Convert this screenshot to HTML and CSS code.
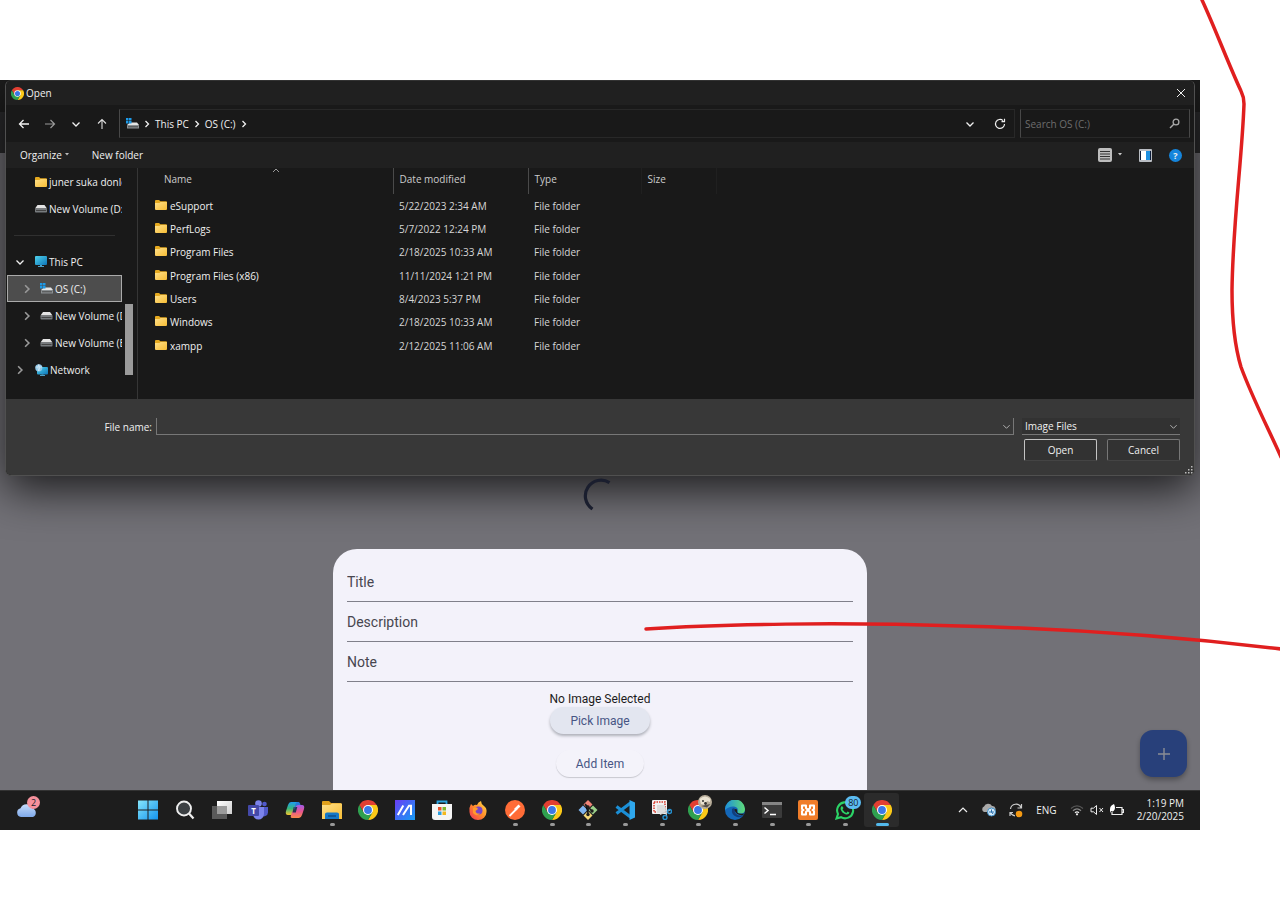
FILE: index.html
```html
<!DOCTYPE html>
<html lang="en">
<head>
<meta charset="utf-8">
<title>Open</title>
<link rel="stylesheet" href="styles.css">
</head>
<body>
<svg class="defs" aria-hidden="true">
  <defs>
    <linearGradient id="gFolder" x1="0" y1="0" x2="1" y2="1"><stop offset="0" stop-color="#ffe08a"/><stop offset="1" stop-color="#f7bd35"/></linearGradient>
    <linearGradient id="gScreen" x1="0" y1="0" x2="1" y2="1"><stop offset="0" stop-color="#4fd3ec"/><stop offset="1" stop-color="#0d74b8"/></linearGradient>
    <linearGradient id="gWin" x1="0" y1="0" x2="1" y2="1"><stop offset="0" stop-color="#86e6fb"/><stop offset="1" stop-color="#1393ee"/></linearGradient>
    <linearGradient id="gCloud" x1="0" y1="0" x2="0" y2="1"><stop offset="0" stop-color="#c5dcfb"/><stop offset="1" stop-color="#7fa9ea"/></linearGradient>
    <linearGradient id="gMy" x1="0" y1="0" x2="1" y2="1"><stop offset="0" stop-color="#6a3df5"/><stop offset="1" stop-color="#159df5"/></linearGradient>
    <linearGradient id="gCopA" x1="0" y1="0" x2="0" y2="1"><stop offset="0" stop-color="#1f9cf0"/><stop offset=".5" stop-color="#37b67c"/><stop offset="1" stop-color="#f6c52d"/></linearGradient>
    <linearGradient id="gCopB" x1="0" y1="0" x2="0" y2="1"><stop offset="0" stop-color="#a05be8"/><stop offset=".5" stop-color="#e8568f"/><stop offset="1" stop-color="#f98a4a"/></linearGradient>
    <linearGradient id="gFox" x1="1" y1="0" x2="0" y2="1"><stop offset="0" stop-color="#ffe14a"/><stop offset=".5" stop-color="#ff8a2a"/><stop offset="1" stop-color="#f0305a"/></linearGradient>
    <linearGradient id="gEdge" x1="0" y1="0" x2="1" y2="0"><stop offset="0" stop-color="#1d8fdc"/><stop offset="1" stop-color="#5fdc78"/></linearGradient>
    <linearGradient id="gTask" x1="0" y1="0" x2="1" y2="1"><stop offset="0" stop-color="#fff"/><stop offset="1" stop-color="#cfcfcf"/></linearGradient>
    <symbol id="chrome" viewBox="0 0 24 24">
      <path fill="#e23f32" d="M1.6 6A12 12 0 0 1 22.4 6H12L6.8 15Z"/>
      <path fill="#fbc918" d="M22.4 6A12 12 0 0 1 12 24L17.2 15 12 6Z"/>
      <path fill="#2fa04f" d="M12 24A12 12 0 0 1 1.6 6L6.8 15H17.2Z"/>
      <circle cx="12" cy="12" r="6" fill="#fff"/><circle cx="12" cy="12" r="4.7" fill="#3b78e7"/>
    </symbol>
    <symbol id="folder" viewBox="0 0 12 10">
      <path fill="#e5a91f" d="M0 1Q0 0 1 0H4L5.400 1.300H11Q12 1.300 12 2.300V5H0Z"/>
      <path fill="url(#gFolder)" d="M0 3H4.500L5.600 2H12V9Q12 10 11 10H1Q0 10 0 9Z"/>
    </symbol>
    <symbol id="drive" viewBox="0 0 12 8">
      <path fill="#e4e4e4" d="M2.500 0H9.500L12 3.500H0Z"/><rect y="3.500" width="12" height="4" rx=".8" fill="#777b7e"/><rect x="1" y="5" width="10" height="1" fill="#444"/>
    </symbol>
    <symbol id="osdrive" viewBox="0 0 13 11">
      <path fill="#e4e4e4" d="M4 4.500H11L13 7H1Z"/><rect x="1" y="7" width="12" height="3.500" rx=".6" fill="#8b9093"/><rect x="2" y="8.300" width="10" height="1" fill="#494949"/>
      <path fill="#1d9ae8" d="M0 0H2.500V2.500H0ZM3 0H5.500V2.500H3ZM0 3H2.500V5.500H0ZM3 3H5.500V5.500H3Z"/>
    </symbol>
    <symbol id="pc" viewBox="0 0 12 11"><rect width="12" height="9" rx="1" fill="url(#gScreen)"/><path fill="#4d9fc5" d="M5 9H7V10H9V11H3V10H5Z"/></symbol>
    <symbol id="network" viewBox="0 0 13 12"><rect x="2" y="3" width="11" height="7.500" rx="1" fill="url(#gScreen)"/><path fill="#4d9fc5" d="M6.500 10.500H8.500V11H10V12H5V11H6.500Z"/><circle cx="3.800" cy="3.800" r="3.600" fill="#8fc7e6"/><path d="M.8 3H7M3.800.4Q2 3.800 3.800 7M3.800.4Q5.600 3.800 3.800 7" fill="none" stroke="#e7f4fb" stroke-width=".6"/></symbol>
    <symbol id="right" viewBox="0 0 8 8"><path d="M2.500 1L5.500 4 2.500 7" fill="none" stroke="currentColor" stroke-width="1.300"/></symbol>
    <symbol id="down" viewBox="0 0 10 10"><path d="M1.500 3.500L5 7 8.500 3.500" fill="none" stroke="currentColor" stroke-width="1.300"/></symbol>
  </defs>
</svg>

<main class="desktop">
  <section class="stage">
    <section class="dialog" aria-label="Open">
      <header class="titlebar">
        <svg width="13" height="13"><use href="#chrome"/></svg>
        <h1>Open</h1>
        <button class="plain close" aria-label="Close"><svg width="10" height="10" viewBox="0 0 10 10"><path d="M1 1L9 9M9 1L1 9" stroke="#eee" stroke-width="1"/></svg></button>
      </header>
      <nav class="navbar">
        <div class="arrows">
          <button class="plain" aria-label="Back"><svg width="12" height="12" viewBox="0 0 12 12"><path d="M11 6H1.500M5.500 2L1.500 6 5.500 10" fill="none" stroke="#f2f2f2" stroke-width="1.300"/></svg></button>
          <button class="plain" aria-label="Forward"><svg width="12" height="12" viewBox="0 0 12 12"><path d="M1 6H10.500M6.500 2L10.500 6 6.500 10" fill="none" stroke="#9a9a9a" stroke-width="1.200"/></svg></button>
          <button class="plain" aria-label="Recent locations"><svg width="10" height="10"><use href="#down"/></svg></button>
          <button class="plain" aria-label="Up"><svg width="12" height="12" viewBox="0 0 12 12"><path d="M6 11V1.500M2 5.500L6 1.500 10 5.500" fill="none" stroke="#ddd" stroke-width="1.100"/></svg></button>
        </div>
        <div class="address">
          <svg width="13" height="11"><use href="#osdrive"/></svg>
          <svg width="8" height="8"><use href="#right"/></svg>
          <a href="#pc">This PC</a>
          <svg width="8" height="8"><use href="#right"/></svg>
          <a href="#c">OS (C:)</a>
          <svg width="8" height="8"><use href="#right"/></svg>
          <button class="plain history" aria-label="Previous locations"><svg width="10" height="10"><use href="#down"/></svg></button>
          <button class="plain" aria-label="Refresh"><svg width="12" height="12" viewBox="0 0 12 12"><path d="M10.500 6A4.500 4.500 0 1 1 9 2.600M10.500 .8V3.600H7.500" fill="none" stroke="#eee" stroke-width="1.200"/></svg></button>
        </div>
        <div class="search">
          <input type="search" placeholder="Search OS (C:)" aria-label="Search OS (C:)">
          <svg width="11" height="11" viewBox="0 0 11 11"><circle cx="7" cy="4" r="2.900" fill="none" stroke="#aaa" stroke-width="1.300"/><path d="M5 6L1 10" stroke="#aaa" stroke-width="1.500"/></svg>
        </div>
      </nav>
      <div class="toolbar">
        <button class="plain organize">Organize <svg width="6" height="4" viewBox="0 0 6 4"><path fill="#bbb" d="M1 0H5L3 2.500Z"/></svg></button>
        <button class="plain">New folder</button>
        <button class="plain view" aria-label="Change your view"><svg width="14" height="14" viewBox="0 0 14 14"><rect width="14" height="14" rx="2" fill="#bdbdbd"/><path d="M2 3.500H12M2 6H12M2 8.500H12M2 11H12" stroke="#333"/></svg><svg width="6" height="4" viewBox="0 0 6 4"><path fill="#ccc" d="M1 0H5L3 2.500Z"/></svg></button>
        <button class="plain" aria-label="Preview pane"><svg width="13" height="13" viewBox="0 0 13 13"><rect width="13" height="13" rx="1" fill="#b9bdc3"/><rect x="1" y="2" width="11" height="9" fill="#0d1d3a"/><rect x="2" y="2" width="5" height="9" fill="#fff"/><rect x="7" y="2" width="4" height="9" fill="#1d8fe0"/></svg></button>
        <button class="help" aria-label="Help">?</button>
      </div>
      <div class="content">
        <aside class="sidebar">
          <ul class="tree">
            <li><a href="#d" class="shortcut"><svg width="12" height="10"><use href="#folder"/></svg>juner suka donlod</a></li>
            <li><a href="#d" class="shortcut"><svg width="12" height="8"><use href="#drive"/></svg>New Volume (D:)</a></li>
            <li class="rule"></li>
            <li><a href="#d" class="root open"><svg class="tw" width="10" height="10"><use href="#down"/></svg><svg width="12" height="11"><use href="#pc"/></svg>This PC</a></li>
            <li><a href="#d" class="child selected"><svg class="tw" width="10" height="10"><use href="#right"/></svg><svg width="13" height="11"><use href="#osdrive"/></svg>OS (C:)</a></li>
            <li><a href="#d" class="child"><svg class="tw" width="10" height="10"><use href="#right"/></svg><svg width="13" height="8"><use href="#drive"/></svg>New Volume (D:)</a></li>
            <li><a href="#d" class="child"><svg class="tw" width="10" height="10"><use href="#right"/></svg><svg width="13" height="8"><use href="#drive"/></svg>New Volume (E:)</a></li>
            <li><a href="#d" class="root"><svg class="tw" width="10" height="10"><use href="#right"/></svg><svg width="13" height="12"><use href="#network"/></svg>Network</a></li>
          </ul>
          <div class="track"><div class="thumb"></div></div>
        </aside>
        <div class="files">
          <table>
            <colgroup><col class="c-name"><col class="c-date"><col class="c-type"><col class="c-size"><col></colgroup>
            <thead><tr><th class="name">Name<svg class="sort" width="8" height="5" viewBox="0 0 8 5"><path d="M1 4L4 1 7 4" fill="none" stroke="#999"/></svg></th><th>Date modified</th><th>Type</th><th>Size</th><th></th></tr></thead>
            <tbody>
              <tr><td><svg width="12" height="10"><use href="#folder"/></svg>eSupport</td><td>5/22/2023 2:34 AM</td><td>File folder</td><td></td><td></td></tr>
              <tr><td><svg width="12" height="10"><use href="#folder"/></svg>PerfLogs</td><td>5/7/2022 12:24 PM</td><td>File folder</td><td></td><td></td></tr>
              <tr><td><svg width="12" height="10"><use href="#folder"/></svg>Program Files</td><td>2/18/2025 10:33 AM</td><td>File folder</td><td></td><td></td></tr>
              <tr><td><svg width="12" height="10"><use href="#folder"/></svg>Program Files (x86)</td><td>11/11/2024 1:21 PM</td><td>File folder</td><td></td><td></td></tr>
              <tr><td><svg width="12" height="10"><use href="#folder"/></svg>Users</td><td>8/4/2023 5:37 PM</td><td>File folder</td><td></td><td></td></tr>
              <tr><td><svg width="12" height="10"><use href="#folder"/></svg>Windows</td><td>2/18/2025 10:33 AM</td><td>File folder</td><td></td><td></td></tr>
              <tr><td><svg width="12" height="10"><use href="#folder"/></svg>xampp</td><td>2/12/2025 11:06 AM</td><td>File folder</td><td></td><td></td></tr>
            </tbody>
          </table>
        </div>
      </div>
      <footer class="footer">
        <div class="file-row">
          <label for="fname">File name:</label>
          <div class="combo"><input id="fname" type="text"><svg width="9" height="9" viewBox="0 0 10 10"><path d="M1.500 3.500L5 7 8.500 3.500" fill="none" stroke="#bbb"/></svg></div>
          <div class="combo type"><select aria-label="File type"><option>Image Files</option></select><svg width="9" height="9" viewBox="0 0 10 10"><path d="M1.500 3.500L5 7 8.500 3.500" fill="none" stroke="#bbb"/></svg></div>
        </div>
        <div class="actions"><button class="btn primary">Open</button><button class="btn">Cancel</button></div>
        <svg class="grip" width="8" height="8" viewBox="0 0 8 8"><path fill="#bbb" d="M6 0H7.500V1.500H6ZM3 3H4.500V4.500H3ZM6 3H7.500V4.500H6ZM0 6H1.500V7.500H0ZM3 6H4.500V7.500H3ZM6 6H7.500V7.500H6Z"/></svg>
      </footer>
    </section>

    <div class="loading"><svg width="34" height="34" viewBox="0 0 34 34"><path d="M26.500 4.700A15 15 0 0 0 9.500 31" fill="none" stroke="#1a1e2e" stroke-width="3.200"/></svg></div>

    <form class="sheet">
      <input class="field" type="text" placeholder="Title" aria-label="Title">
      <input class="field" type="text" placeholder="Description" aria-label="Description">
      <input class="field" type="text" placeholder="Note" aria-label="Note">
      <p>No Image Selected</p>
      <button type="button" class="pill filled">Pick Image</button>
      <button type="button" class="pill">Add Item</button>
    </form>
    <button class="fab" aria-label="Add"><svg width="12" height="12" viewBox="0 0 12 12"><path d="M6 0V12M0 6H12" stroke="#8b8d95" stroke-width="1.400"/></svg></button>
  </section>

  <footer class="taskbar">
    <div class="widgets"><button class="plain weather" aria-label="Widgets"><svg width="22" height="14" viewBox="0 0 22 14"><path fill="url(#gCloud)" d="M5 14A4.500 4.500 0 0 1 4.500 5.200 6.500 6.500 0 0 1 16.500 5.500 4.500 4.500 0 0 1 17 14Z"/></svg><span class="badge pink">2</span></button></div>
    <div class="apps">
      <button class="app" aria-label="Start"><svg viewBox="0 0 20 20"><path fill="url(#gWin)" d="M0 .5H9.500V9.500H0ZM10.500 .5H20V9.500H10.500ZM0 10.500H9.500V19.500H0ZM10.500 10.500H20V19.500H10.500Z"/></svg></button>
      <button class="app" aria-label="Search"><svg viewBox="0 0 20 20"><circle cx="9" cy="8.500" r="7" fill="#3c4043" stroke="#eee" stroke-width="1.900"/><path d="M14 13.500L18.500 18.500" stroke="#eee" stroke-width="2.200"/></svg></button>
      <button class="app" aria-label="Task view"><svg viewBox="0 0 20 20"><rect x="5" y="1" width="15" height="13" fill="url(#gTask)"/><rect y="6" width="15" height="13" fill="#5a5a5a"/><rect x="5" y="6" width="10" height="8" fill="#9b9b9b"/></svg></button>
      <button class="app" aria-label="Teams"><svg viewBox="0 0 20 20"><circle cx="16.500" cy="4" r="2.300" fill="#5059c9"/><circle cx="10.500" cy="3.500" r="3.300" fill="#7b83eb"/><path d="M12 7H20V12.500A4 4 0 0 1 13 15Z" fill="#5059c9"/><path d="M5 7H16V14A5.500 5.500 0 0 1 5 14Z" fill="#7b83eb"/><rect y="5" width="11" height="11" rx="1" fill="#4449a8"/><text x="5.500" y="13.500" text-anchor="middle" class="teams">T</text></svg></button>
      <button class="app" aria-label="Copilot"><svg viewBox="0 0 20 20"><path d="M6 2H13Q15 2 14 5L11 12Q10 15 7 15H3Q0 15 1 11L3 5Q4 2 6 2Z" fill="url(#gCopA)"/><path d="M13 5H17Q20 5 19 9L17 15Q16 18 14 18H7Q5 18 6 15L9 8Q10 5 13 5Z" fill="url(#gCopB)"/><path d="M8.700 7H12.300L10.800 12.500H7.500Z" fill="#263450"/><path d="M13 2Q15 2 15.500 5H13Q11 5 10 8L9 10 10.500 4Q11 2 13 2Z" fill="#2678d8"/></svg></button>
      <button class="app run" aria-label="File Explorer"><svg viewBox="0 0 20 20"><path fill="#e1a11c" d="M0 2Q0 1 1 1H7L9 3H19V8H0Z"/><path fill="url(#gFolder)" d="M0 5H8L10 3.500H20V19H0Z"/><path fill="#1478c8" d="M3 19V14Q3 12.500 5 12.500H15Q17 12.500 17 14V19Z"/><path d="M6 16H14" stroke="#0b4e8c" stroke-width="1.500"/></svg></button>
      <button class="app" aria-label="Chrome"><svg><use href="#chrome"/></svg></button>
      <button class="app" aria-label="MyASUS"><svg viewBox="0 0 20 20"><rect width="20" height="20" fill="url(#gMy)"/><path d="M2.800 15L8.300 5.500M8 15L14 5.800H16V15" stroke="#fff" stroke-width="2" fill="none"/></svg></button>
      <button class="app" aria-label="Microsoft Store"><svg viewBox="0 0 20 20"><path d="M5.500 5V1.500H14.500V5" fill="none" stroke="#2ba4e0" stroke-width="1.800"/><path fill="#f5f5f5" d="M0 4H20V17Q20 20 17 20H3Q0 20 0 17Z"/><path fill="#e8502a" d="M6 7H9.500V10.500H6Z"/><path fill="#7cb82e" d="M10.500 7H14V10.500H10.500Z"/><path fill="#2a9fe0" d="M6 11.500H9.500V15H6Z"/><path fill="#f3b81e" d="M10.500 11.500H14V15H10.500Z"/></svg></button>
      <button class="app" aria-label="Firefox"><svg viewBox="0 0 20 20"><path fill="url(#gFox)" d="M3 4L5 6Q7 4 9 5Q10 2 13 1Q13 4 16 6Q19 8 18.500 12A8.500 8 0 0 1 1.500 12Q1 7 3 4Z"/><circle cx="10.500" cy="10.500" r="4" fill="#7845c8"/><path d="M5 8Q9 6 10 9L7.500 11Q8 14 12 13.500Q8 17 5 13Z" fill="#ff9a2c"/></svg></button>
      <button class="app run" aria-label="Postman"><svg viewBox="0 0 20 20"><circle cx="10" cy="10" r="10" fill="#ff6c37"/><path d="M4.500 16L12 8.500" stroke="#fff" stroke-width="1.800"/><path d="M9 9L13.500 4.500 15.500 6.500 11 10.500Z" fill="#fff"/></svg></button>
      <button class="app run" aria-label="Chrome"><svg><use href="#chrome"/></svg></button>
      <button class="app run" aria-label="Git Bash"><svg viewBox="0 0 20 20"><path fill="#ef8377" d="M10 0L14.500 4.500 10 9 5.500 4.500Z"/><path fill="#7fb4ee" d="M5 5.500L9.500 10 5 14.500 .5 10Z"/><path fill="#9bd08b" d="M15 5.500L19.500 10 15 14.500 10.500 10Z"/><path fill="#f5d978" d="M10 11L14.500 15.500 10 20 5.500 15.500Z"/><path d="M7 4L10 7V15M10 7L14 11" stroke="#1d1d1d" stroke-width="1.500"/><circle cx="10" cy="7" r="1.700" fill="#1d1d1d"/><circle cx="14" cy="11" r="1.700" fill="#1d1d1d"/><circle cx="10" cy="14.500" r="1.700" fill="#1d1d1d"/></svg></button>
      <button class="app run" aria-label="Visual Studio Code"><svg viewBox="0 0 20 20"><path d="M15.500 3L1.500 13.500M15.500 17L1.500 6.500" stroke="#1b8fd6" stroke-width="3.200"/><path fill="#2fa8ee" d="M14.500 0L20 2.500V17.500L14.500 20Z"/></svg></button>
      <button class="app run" aria-label="Snipping Tool"><svg viewBox="0 0 20 20"><rect width="15" height="14" rx="1" fill="#f2f2f2"/><rect x="2" y="2" width="11" height="10" fill="none" stroke="#d83b2e" stroke-width="1.500" stroke-dasharray="1.500 1"/><rect x="5" y="5" width="8" height="8" fill="#ddd"/><path d="M8 14.500L18 10M13.500 8L14.500 16" stroke="#ccc" stroke-width="1.200"/><circle cx="17.500" cy="11.500" r="2" fill="none" stroke="#2590d0" stroke-width="1.400"/><circle cx="13" cy="17.500" r="2" fill="none" stroke="#2590d0" stroke-width="1.400"/></svg></button>
      <button class="app run" aria-label="Chrome profile"><svg><use href="#chrome"/></svg><svg class="avatar" viewBox="0 0 14 14"><circle cx="7" cy="7" r="7" fill="#b8ad9a"/><path d="M1.500 4Q7-1 12.500 4L12 7 9 6 7 10 3 9Z" fill="#eae2d2"/><circle cx="5" cy="6" r=".9" fill="#222"/><circle cx="7.500" cy="8.500" r="1.400" fill="#333"/><path d="M3 11L9 12.500 12.500 9Z" fill="#57504a"/></svg></button>
      <button class="app run" aria-label="Edge"><svg viewBox="0 0 20 20"><circle cx="10" cy="10" r="10" fill="#1467b8"/><path fill="url(#gEdge)" d="M0 10A10 10 0 0 1 20 9Q20 13.500 15.500 13.500 12 13.500 12.500 12 14 7.500 9 6.500 4 6 0 10Z"/><path fill="#123e7c" d="M7 9Q6 15 12 17 16 18 18.500 15 14 17 11 14 9 12 10 9 9 7.500 7 9Z"/><path d="M9.500 10Q10 8.500 12 9.500L12.300 12.500Q14 14.500 19 13.500L18.300 15Q11.500 16 9.500 10Z" fill="#1d1d1d"/></svg></button>
      <button class="app run" aria-label="Terminal"><svg viewBox="0 0 20 20"><rect y="2" width="20" height="16" rx="1" fill="#3b3b3b"/><rect y="2" width="20" height="3" fill="#858585"/><path d="M2.500 7.500L6 10.500 2.500 13.500M8 14.500H14" stroke="#fff" stroke-width="1.500" fill="none"/></svg></button>
      <button class="app run" aria-label="XAMPP"><svg viewBox="0 0 20 20"><rect width="20" height="20" rx="2" fill="#f07d2a"/><path d="M8 8V5.500H4V9L5.500 10 4 11V14.500H8V12L12 8V5.500H16V9L14.500 10 16 11V14.500H12V12Z" fill="none" stroke="#fff" stroke-width="2" stroke-linejoin="round"/></svg></button>
      <button class="app run" aria-label="WhatsApp"><svg viewBox="0 0 20 20"><path d="M1.500 18.500L3 14A8 8 0 1 1 6 17.200Z" fill="#1d1d1d" stroke="#2bd366" stroke-width="2.100"/><path d="M7 6L8.500 8 7.500 9.500Q9 12 11.500 13L12.500 11.500 14.500 12.500Q14 15 11 14.500 6.500 13 5.500 9 5.500 6.500 7 6Z" fill="#2bd366"/></svg><span class="badge blue">80</span></button>
      <button class="app run active" aria-label="Open dialog"><svg><use href="#chrome"/></svg></button>
    </div>
    <div class="tray">
      <svg width="10" height="10" viewBox="0 0 10 10"><path d="M1 7L5 3 9 7" fill="none" stroke="#eee" stroke-width="1.200"/></svg>
      <svg width="15" height="14" viewBox="0 0 15 14"><path fill="#a9a9a9" d="M3 9A3 3 0 0 1 3 3.500 4.500 4.500 0 0 1 11 3 3 3 0 0 1 12 9Z"/><circle cx="10.500" cy="9" r="4" fill="#d7ecfa" stroke="#3f8fc9"/><path d="M8 9H13M10.500 6.500V9L12 11" stroke="#276fae" fill="none"/></svg>
      <svg width="14" height="15" viewBox="0 0 14 15"><path d="M1.500 6A5.500 5.500 0 0 1 12 4.500M12.500 1V5H8.500M6 12.800A5.500 5.500 0 0 1 1.500 9.500M1 13V9.500H4" fill="none" stroke="#ccc" stroke-width="1.200"/><circle cx="10" cy="11" r="3.300" fill="#f59a13"/></svg>
      <span class="lang">ENG</span>
      <div class="status">
        <svg width="14" height="12" viewBox="0 0 14 12"><path d="M1 4.500Q7-.8 13 4.500" fill="none" stroke="#555" stroke-width="1.200"/><path d="M3 6.800Q7 3 11 6.800" fill="none" stroke="#888" stroke-width="1.200"/><path d="M5 8.800Q7 7 9 8.800" fill="none" stroke="#eee" stroke-width="1.200"/><circle cx="7" cy="10.300" r="1.100" fill="#eee"/></svg>
        <svg width="14" height="12" viewBox="0 0 14 12"><path d="M1 4.200H3.500L6.500 1.500V10.500L3.500 7.800H1ZM9.500 4L13 8M13 4L9.500 8" fill="none" stroke="#eee"/></svg>
        <svg width="14" height="13" viewBox="0 0 14 13"><path d="M6 3.500H12V10.500H2V8M12 5.500H13.500V8.500H12" fill="none" stroke="#eee" stroke-width="1.200"/><path fill="#fff" d="M0 5Q0 1.500 4 0 6 4 4 6.500 3 8 1 7L0 9Z"/></svg>
      </div>
      <time>1:19 PM<br>2/20/2025</time>
    </div>
  </footer>
</main>
<svg class="ink" viewBox="0 0 1280 910" aria-hidden="true"><path d="M1202 0C1215 28 1228 63 1241 91Q1244 97 1244 104C1242 160 1233 220 1232 290C1232 325 1235 347 1241 367C1252 397 1268 428 1281 457"/><path d="M646 629C720 624 840 622 960 626C1080 629 1180 637 1281 649"/></svg>
</body>
</html>
```
FILE: styles.css
```css
* { box-sizing: border-box; }
body {
  position: relative;
  display: flex;
  min-height: 100vh;
  margin: 0;
  padding: 80px 80px 80px 0;
  background: #fff;
  color: #f0f0f0;
  font: 10px/14px "Open Sans", "Noto Sans", sans-serif;
}
svg { display: block; flex: none; }
a { color: inherit; text-decoration: none; }
button, input, select { font: inherit; color: inherit; }
.defs { position: absolute; width: 0; height: 0; }
.ink { position: absolute; top: 0; left: 0; width: 100%; pointer-events: none; }
.ink path { fill: none; stroke: #e01f1f; stroke-width: 3.500; stroke-linecap: round; }
.plain { display: flex; align-items: center; justify-content: center; padding: 0; border: 0; background: none; }

.desktop { display: flex; flex: 1; flex-direction: column; min-width: 0; background: #727177; }
.stage {
  position: relative;
  display: flex;
  flex: 1;
  flex-direction: column;
  overflow: hidden;
  background: linear-gradient(#1d1d1d 32px, #2b2b2d 32px, #2b2b2d 73px, #727177 73px);
}

.dialog {
  display: flex;
  flex-direction: column;
  margin: 0 5px 0 5px;
  overflow: hidden;
  border: 1px solid #505050;
  border-top-color: #333;
  border-radius: 6px;
  background: #191919;
  box-shadow: 0 14px 44px rgba(0, 0, 0, .75);
}
.titlebar { display: flex; align-items: center; gap: 2px; height: 24px; padding: 0 8px 0 5px; background: #202020; }
.titlebar h1 { margin: 0; font-size: 10px; font-weight: 400; }
.close { margin-left: auto; }
.navbar { display: flex; height: 37px; padding: 4px 4px 4px 5px; }
.arrows { display: grid; grid-template-columns: repeat(4, 26px); width: 108px; }
.address, .search { display: flex; align-items: center; border: 1px solid #282828; border-left-color: #484848; }
.address { flex: 1; gap: 4px; padding: 0 8px 0 6px; }
.history { margin-left: auto; margin-right: 15px; }
.search { width: 170px; margin-left: 5px; padding: 0 9px 0 4px; border-right-color: #484848; }
.search input { flex: 1; min-width: 0; padding: 0; border: 0; outline: 0; background: none; }
.search input::placeholder { color: #6e6e6e; opacity: 1; }
.toolbar { display: flex; align-items: center; height: 26px; padding: 0 12px 0 14px; background: #202020; }
.organize { gap: 2px; margin-right: 22px; }
.view { gap: 5px; margin-left: auto; margin-right: 16px; }
.help { width: 13px; height: 13px; margin-left: 17px; padding: 0; border: 0; border-radius: 50%; background: #1585dc; font-size: 9px; font-weight: 700; line-height: 13px; }

.content { display: flex; height: 231px; }
.sidebar { display: flex; width: 132px; border-right: 1px solid #363636; }
.tree { width: 116px; margin: 0; padding: 0 0 0 1px; overflow: hidden; list-style: none; white-space: nowrap; }
.tree a { display: flex; align-items: center; gap: 2px; height: 27px; }
.tree .rule { height: 26px; margin: 0 7px; background: linear-gradient(#303030, #303030) center / 100% 1px no-repeat; }
.tree .shortcut { padding-left: 28px; }
.tree .root { padding-left: 8px; }
.tree .child { gap: 2px; padding-left: 15px; }
.tree .root .tw { margin-right: 8px; }
.tree .child .tw { margin-right: 6px; color: #999; }
.tree .root:not(.open) .tw { color: #999; }
.tree .selected { padding-left: 14px; border: 1px solid #aaa; background: #4d4d4d; }
.track { width: 15px; padding: 136px 4px 0 3px; }
.thumb { height: 71px; background: #9b9b9b; }

.files { flex: 1; min-width: 0; }
table { width: 100%; border-collapse: collapse; table-layout: fixed; }
.c-name { width: 255px; }
.c-date { width: 135px; }
.c-type { width: 113px; }
.c-size { width: 75px; }
th { position: relative; height: 26px; padding: 0 0 4px 6px; border-right: 1px solid #202020; color: #ccc; font-weight: 400; text-align: left; }
th:first-child, th:nth-child(2) { border-right-color: #4a4a4a; }
th:last-child { border: 0; }
th.name { padding-left: 26px; }
.sort { position: absolute; top: 0; right: 113px; }
td { height: 23px; padding: 0 0 0 6px; color: #d6d6d6; white-space: nowrap; }
tr:nth-child(3n) td { height: 24px; }
td:first-child { padding-left: 17px; color: #f0f0f0; }
td svg { display: inline-block; margin-right: 3px; }

.footer { position: relative; display: flex; flex-direction: column; gap: 4px; height: 76px; padding: 19px 14px 14px; background: #383838; }
.file-row { display: flex; align-items: center; height: 17px; }
.file-row label { width: 136px; padding-right: 4px; text-align: right; }
.combo { position: relative; display: flex; flex: 1; align-items: center; align-self: stretch; border: solid #777; border-width: 0 1px 1px; }
.combo input, .combo select { width: 100%; height: 100%; padding: 0 3px; border: 0; outline: 0; background: none; appearance: none; }
.combo svg { position: absolute; right: 2px; pointer-events: none; }
.combo.type { flex: none; width: 158px; margin-left: 8px; border-width: 0 0 1px; background: #323232; }
.actions { display: flex; justify-content: flex-end; gap: 10px; }
.btn { width: 73px; height: 22px; padding: 0; border: 1px solid #777; border-bottom-color: #444; border-radius: 2px; background: #323232; }
.primary { border-color: #c4c4c4 #c4c4c4 #444; }
.grip { position: absolute; right: 1px; bottom: 1px; }

.loading { display: flex; flex: none; justify-content: center; height: 73px; padding-top: 2px; }
.loading svg { position: relative; }
.sheet {
  display: flex;
  flex: 1;
  flex-direction: column;
  align-items: center;
  align-self: center;
  width: 44.500%;
  padding: 13px 14px 12px;
  border-radius: 24px 24px 0 0;
  background: #f3f2fa;
  color: #1c1b20;
  font: 12px/16px Roboto, sans-serif;
}
.field { flex: none; width: 100%; height: 40px; padding: 0; border: 0; border-bottom: 1px solid #80808a; outline: 0; background: none; font-size: 14px; }
.field::placeholder { color: #47464f; opacity: 1; }
.sheet p { margin: 9px 0 0; }
.pill { height: 27px; padding: 0 20px; border: 0; border-radius: 14px; background: #f4f3fa; box-shadow: 0 1px 1px #c8c8cf; color: #475584; }
.filled { margin-bottom: 16px; background: #e3e6f0; box-shadow: 0 2px 3px #aeb0b9; }
.fab { position: absolute; right: 13px; bottom: 13px; display: grid; place-items: center; width: 47px; height: 47px; padding: 0; border: 0; border-radius: 13px; background: #28407a; box-shadow: 0 3px 5px rgba(0, 0, 0, .3); }

.taskbar { display: flex; align-items: stretch; height: 40px; padding-bottom: 1px; border-top: 1px solid #333; background: #1d1d1d; }
.widgets { display: flex; align-items: center; width: 130px; padding-left: 16px; }
.weather { position: relative; width: 22px; height: 28px; }
.apps { display: grid; grid-template-columns: repeat(21, 1fr); width: 770px; }
.app { position: relative; display: grid; place-items: center; padding: 0; border: 0; background: none; }
.app > svg { width: 20px; height: 20px; }
.app.run::after { position: absolute; bottom: 3px; left: 50%; width: 5px; height: 3px; margin-left: -2px; border-radius: 2px; background: #999; content: ""; }
.app.active { margin: 2px 1px; border-radius: 3px; background: #2b2b2b; }
.app.active::after { bottom: 1px; width: 13px; margin-left: -6px; background: #53b9ec; }
.app .avatar { position: absolute; top: 4px; right: 5px; width: 14px; height: 14px; }
.teams { fill: #fff; font: 700 8px "Open Sans", sans-serif; }
.badge { position: absolute; height: 13px; border-radius: 7px; color: #17222c; font-size: 9px; line-height: 13px; text-align: center; }
.pink { top: 0; right: -2px; width: 13px; background: #f5919c; }
.blue { top: 5px; right: 2px; width: 16px; background: #5bbcf2; }
.tray { display: flex; flex: 1; align-items: center; justify-content: flex-end; gap: 13px; padding-right: 16px; }
.status { display: flex; align-items: center; gap: 6px; }
time { line-height: 13px; text-align: right; }
```
